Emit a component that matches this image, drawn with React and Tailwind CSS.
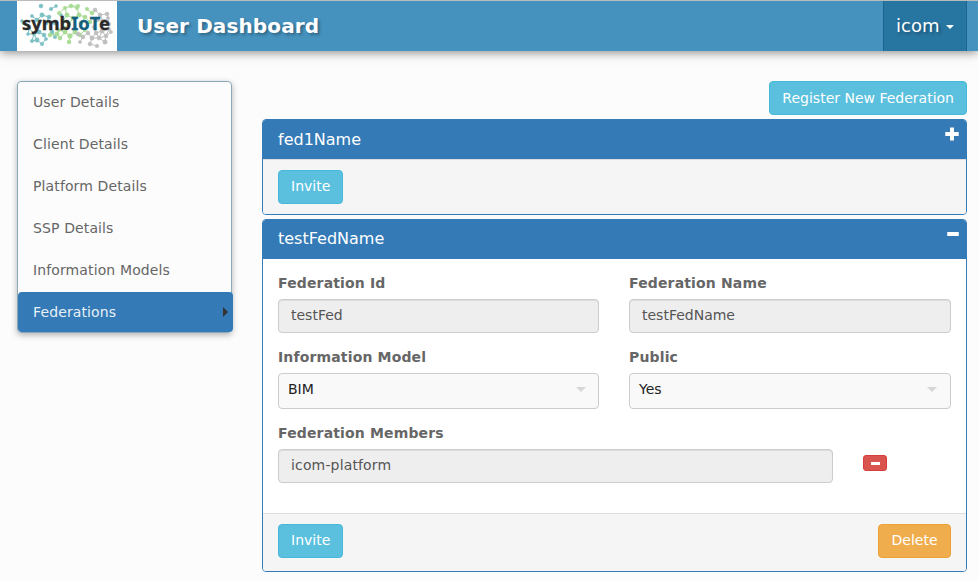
import React from "react";

const CLUSTERS = [
  { color: "#7cc0c4", nodes: [[24,5,2],[34,8,1.8],[39,5,1.5],[25,14,2.2],[32,16,2],[20,19,2],[29,22,2],[15,15,1.6],[7,22,2],[12,27,2],[5,20,1.5],[22,31,2.2],[27,34,2],[17,33,1.8],[20,39,2.2],[15,40,1.8],[25,43,1.8],[29,38,1.6],[35,31,2],[38,36,1.8],[38,22,2],[44,14,1.6],[11,33,1.5]] },
  { color: "#a9db94", nodes: [[42,12,1.8],[48,7,1.8],[54,5,2],[60,7,1.8],[50,14,2.2],[56,17,2],[46,20,2],[52,23,2],[62,14,2.2],[68,16,2],[64,22,2],[70,8,1.8],[75,12,2],[73,21,2],[33,34,2],[40,33,2.2],[43,37,2],[48,31,2.2],[53,35,2.4],[58,31,2.2],[63,34,2],[42,29,1.8],[52,41,2],[47,27,1.8],[68,29,1.8],[61,5,1.8]] },
  { color: "#bfbfbf", nodes: [[78,9,2],[83,14,2],[90,13,2],[80,19,2],[86,20,2],[91,17,1.6],[92,23,1.8],[71,32,2],[66,36,2],[61,33,2],[75,37,2.2],[79,32,2],[85,30,2.2],[89,35,2],[82,37,2],[88,41,2.2],[94,31,1.6],[73,43,2],[80,45,1.8],[63,41,1.6],[77,26,1.8],[92,28,1.8]] },
];

function Logo() {
  return (
    <svg width="100" height="50" viewBox="0 0 100 50" className="block shrink-0 bg-white">
      {CLUSTERS.map(({ color, nodes }) => (
        <g key={color} fill={color} stroke={color} strokeWidth="1">
          {nodes.map(([x, y], i) =>
            nodes
              .slice(i + 1)
              .filter(([a, b]) => Math.hypot(a - x, b - y) < 8)
              .map(([a, b]) => <line key={`${i}-${a}-${b}`} x1={x} y1={y} x2={a} y2={b} />)
          )}
          {nodes.map(([x, y, r]) => (
            <circle key={`${x}-${y}`} cx={x} cy={y} r={r} strokeWidth="0.5" />
          ))}
        </g>
      ))}
      <text x="5" y="29" textLength="88" lengthAdjust="spacingAndGlyphs" fontSize="18" fontWeight="700" fill="#292929" stroke="#292929" strokeWidth="0.3" className="font-['Noto_Sans',sans-serif]">
        symb<tspan fill="#15607f" stroke="#15607f">IoT</tspan>e
      </text>
    </svg>
  );
}

function Button({ className, children }) {
  return (
    <button className={`h-[34px] rounded-[4px] border text-sm leading-5 text-white ${className}`}>
      {children}
    </button>
  );
}

const INFO = "border-[#46b8da] bg-[#5bc0de] px-3";

const Plus = () => (
  <svg width="14" height="14" viewBox="0 0 14 14" className="mt-[7px] mr-[7px]" fill="#fff">
    <path d="M5 0.5h4V5h4.7v4H9v4.5H5V9H0.3V5H5z" />
  </svg>
);

const Minus = () => (
  <svg width="12" height="4" viewBox="0 0 12 4" className="mt-3 mr-[7px]" fill="#fff">
    <rect x="0.2" width="11.6" height="4" rx="0.6" />
  </svg>
);

function Panel({ title, icon, children, footer, titleClass, footerClass }) {
  return (
    <section className="overflow-hidden rounded-[4px] border border-[#337ab7] bg-white">
      <header className="flex h-[39px] items-start justify-between bg-[#337ab7] text-white">
        <h3 className={`pl-[15px] text-[16px] leading-[18px] ${titleClass}`}>{title}</h3>
        {icon}
      </header>
      {children}
      <footer className={`flex items-start justify-between border-t border-[#ddd] bg-[#f5f5f5] px-[15px] pt-[10px] ${footerClass}`}>
        {footer}
      </footer>
    </section>
  );
}

function Field({ label, children }) {
  return (
    <div>
      <div className="mb-1.5 -mt-px text-sm leading-5 font-bold tracking-[0.15px] text-[#666]">{label}</div>
      {children}
    </div>
  );
}

const Input = ({ value, className = "" }) => (
  <div className={`h-[34px] rounded-[4px] border border-[#ccc] bg-[#eee] px-3 pt-[5px] text-sm leading-5 text-[#555] shadow-[inset_0_1px_1px_rgba(0,0,0,0.075)] ${className}`}>
    {value}
  </div>
);

const Select = ({ value, className = "pr-3" }) => (
  <div className={`flex h-9 justify-between rounded-[4px] border border-[#ccc] bg-[#f9f9f9] pt-[5px] pl-[9px] text-sm leading-5 text-[#222] ${className}`}>
    {value}
    <svg width="10" height="5" viewBox="0 0 10 5" className="mt-2" fill="#d6d6d6">
      <path d="M0 0h10L5 5z" />
    </svg>
  </div>
);

const MENU = ["User Details", "Client Details", "Platform Details", "SSP Details", "Information Models"];

export default function App() {
  return (
    <div className="h-[581px] w-[978px] overflow-hidden bg-[#fcfcfc] font-['DejaVu_Sans',sans-serif]">
      <nav className="flex h-[51px] border-t border-[#bbb] bg-[#4592be] pl-[17px] text-white shadow-[0_1px_10px_rgba(0,0,0,0.5)]">
        <Logo />
        <h1 className="pt-[11px] pl-5 text-[20px] leading-7 font-bold tracking-[0.12px] [text-shadow:2px_2px_3px_rgba(0,0,0,0.3)]">User Dashboard</h1>
        <div className="mr-[11px] ml-auto flex w-[84px] border-x border-[#1b658f] bg-[#2775a1] pt-[11px] pl-3 text-[18px] leading-7 [text-shadow:2px_2px_3px_rgba(0,0,0,0.3)]">
          icom
          <svg width="8" height="4" viewBox="0 0 8 4" className="mt-[13px] ml-[7px]" fill="#fff">
            <path d="M0 0h8L4 4z" />
          </svg>
        </div>
      </nav>

      <div className="flex items-start pt-[30px] pl-[17px]">
        <aside className="h-[252px] w-[215px] rounded-[4px] border border-[#8aa9b8] text-sm leading-5 tracking-[0.12px] text-[#666] shadow-[0_2px_6px_rgba(0,0,0,0.3)]">
          {MENU.map((item) => (
            <div key={item} className="mb-0.5 h-10 pt-[10px] pl-[15px]">{item}</div>
          ))}
          <div className="-mr-0.5 flex h-10 items-center justify-between rounded-[4px] bg-[#337ab7] pr-[5px] pl-[15px] text-[#e8f0f6]">
            Federations
            <svg width="5" height="10" viewBox="0 0 5 10" fill="#333">
              <path d="M0 0l5 5-5 5z" />
            </svg>
          </div>
        </aside>

        <main className="ml-[30px] flex w-[705px] flex-col gap-1">
          <Button className={`self-end ${INFO}`}>Register New Federation</Button>
          <Panel
            title="fed1Name"
            icon={<Plus />}
            titleClass="pt-[11px]"
            footerClass="h-[55px]"
            footer={<Button className={`pb-0.5 ${INFO}`}>Invite</Button>}
          />
          <Panel
            title="testFedName"
            icon={<Minus />}
            titleClass="pt-[10px]"
            footerClass="h-[58px]"
            footer={
              <>
                <Button className={`pb-0.5 ${INFO}`}>Invite</Button>
                <Button className="w-[73px] border-[#eea236] bg-[#f0ad4e] pb-0.5">Delete</Button>
              </>
            }
          >
            <div className="h-[254px] px-[15px] pt-[15px]">
              <div className="grid grid-cols-[321px_322px] gap-x-[30px] gap-y-[15px]">
                <Field label="Federation Id"><Input value="testFed" /></Field>
                <Field label="Federation Name"><Input value="testFedName" /></Field>
                <Field label="Information Model"><Select value="BIM" /></Field>
                <Field label="Public"><Select value="Yes" className="pr-[13px]" /></Field>
              </div>
              <div className="mt-[15px]">
                <Field label="Federation Members">
                  <div className="flex items-start gap-[30px]">
                    <Input value="icom-platform" className="w-[555px] tracking-[0.15px]" />
                    <button className="mt-1.5 flex h-4 w-6 items-center justify-center rounded-[3px] border border-[#d43f3a] bg-[#d9534f]">
                      <span className="h-[3px] w-[9px] bg-white" />
                    </button>
                  </div>
                </Field>
              </div>
            </div>
          </Panel>
        </main>
      </div>
    </div>
  );
}
